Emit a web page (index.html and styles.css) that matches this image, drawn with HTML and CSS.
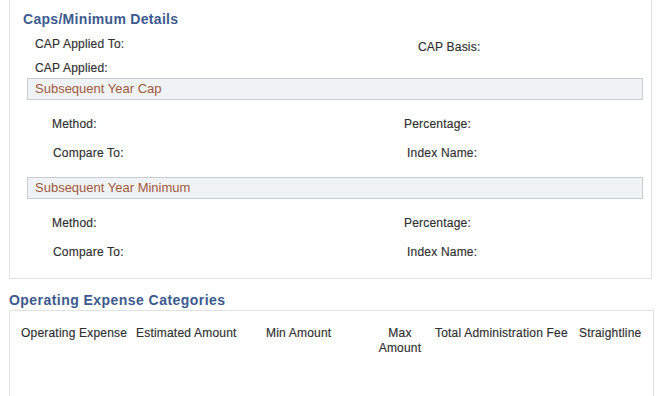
FILE: index.html
```html
<!DOCTYPE html>
<html lang="en">
<head>
    <meta charset="UTF-8">
    <title>Caps/Minimum Details</title>
    <link rel="stylesheet" href="styles.css">
</head>
<body>
    <div class="page">
        <div class="caps-box">
            <div class="box-title">Caps/Minimum Details</div>
            <div class="info-row">
                <span class="label cap-left">CAP Applied To:</span>
                <span class="label cap-basis">CAP Basis:</span>
            </div>
            <div class="info-row info-row-last">
                <span class="label cap-left">CAP Applied:</span>
            </div>

            <div class="group-bar">Subsequent Year Cap</div>
            <div class="group-body">
                <div class="group-row">
                    <span class="label col-left">Method:</span>
                    <span class="label col-right">Percentage:</span>
                </div>
                <div class="group-row">
                    <span class="label col-left shift-1">Compare To:</span>
                    <span class="label col-right shift-3">Index Name:</span>
                </div>
            </div>

            <div class="group-bar">Subsequent Year Minimum</div>
            <div class="group-body last">
                <div class="group-row">
                    <span class="label col-left">Method:</span>
                    <span class="label col-right">Percentage:</span>
                </div>
                <div class="group-row">
                    <span class="label col-left shift-1">Compare To:</span>
                    <span class="label col-right shift-3">Index Name:</span>
                </div>
            </div>
        </div>

        <div class="section-title">Operating Expense Categories</div>
        <div class="expense-box">
            <div class="expense-head">
                <div class="th th-expense">Operating Expense</div>
                <div class="th th-estimated">Estimated Amount</div>
                <div class="th th-min">Min Amount</div>
                <div class="th th-max">Max Amount</div>
                <div class="th th-fee">Total Administration Fee</div>
                <div class="th th-straight">Straightline</div>
            </div>
        </div>
    </div>
</body>
</html>
```

FILE: styles.css
```css
body {
    margin: 0;
    font-family: "Liberation Sans", Arial, sans-serif;
    font-size: 12px;
    color: #2e2e2e;
    background: #ffffff;
}

.page {
    padding-left: 9px;
}

.label,
.th {
    letter-spacing: 0.2px;
    -webkit-text-stroke: 0.15px #2e2e2e;
}

/* caps / minimum group box */
.caps-box {
    width: 643px;
    box-sizing: border-box;
    border: 1px solid #e2e2e2;
    border-top: none;
    padding: 0 8px 11px 17px;
}

.box-title {
    padding: 10px 0 4px;
    margin-left: -4px;
    line-height: 18px;
    font-size: 14px;
    font-weight: bold;
    letter-spacing: 0.3px;
    color: #3d5a8e;
}

.info-row {
    display: flex;
    height: 24px;
    line-height: 24px;
}

.info-row-last {
    height: 22px;
}

.cap-left {
    flex: none;
    width: 383px;
    padding-left: 8px;
}

.cap-basis {
    position: relative;
    top: 3px;
}

.group-bar {
    height: 22px;
    box-sizing: border-box;
    border: 1px solid #c9cdd1;
    background: #f0f3f5;
    padding-left: 7px;
    line-height: 20px;
    font-size: 13px;
    color: #a0583f;
}

.group-body {
    padding: 10px 0 9px;
}

.group-body.last {
    padding-bottom: 0;
}

.group-row {
    display: flex;
    height: 29px;
    line-height: 29px;
}

.col-left {
    flex: none;
    width: 352px;
    padding-left: 25px;
}

.shift-1 {
    padding-left: 26px;
    width: 351px;
}

.shift-3 {
    padding-left: 3px;
}

/* operating expense section */
.section-title {
    margin-top: 12px;
    margin-bottom: 1px;
    line-height: 18px;
    font-size: 14px;
    font-weight: bold;
    letter-spacing: 0.45px;
    color: #3d5a8e;
}

.expense-box {
    width: 645px;
    height: 100px;
    box-sizing: border-box;
    border: 1px solid #e2e2e2;
    border-bottom: none;
}

.expense-head {
    display: flex;
    padding: 15px 0 0 11px;
    line-height: 15px;
}

.th {
    flex: none;
}

.th-expense {
    width: 115px;
}

.th-estimated {
    width: 110px;
}

.th-min {
    width: 112px;
    padding-left: 20px;
}

.th-max {
    width: 44px;
    text-align: center;
}

.th-fee {
    width: 144px;
    padding-left: 13px;
}

.th-straight {
    width: 70px;
}
```
